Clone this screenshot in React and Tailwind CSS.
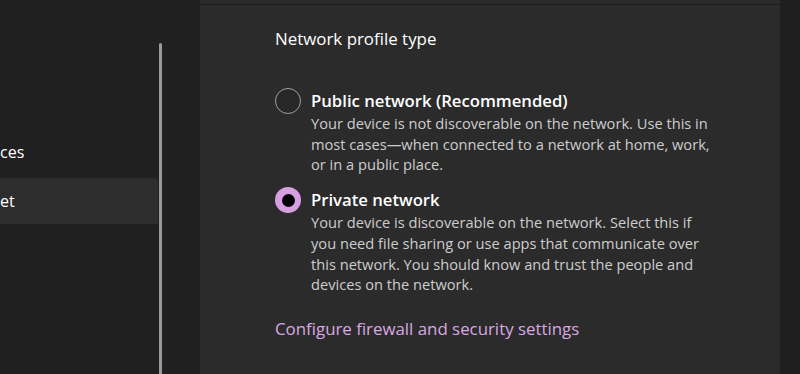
import React from "react";

const font = { fontFamily: '"Open Sans", "Noto Sans", sans-serif' };

function Radio({ checked }) {
  if (checked) {
    return (
      <div className="w-[26px] h-[26px] rounded-full bg-[#d89ee2] flex items-center justify-center shrink-0">
        <div className="w-[13px] h-[13px] rounded-full bg-black" />
      </div>
    );
  }
  return (
    <div className="w-[26px] h-[26px] rounded-full border-[1.5px] border-[#a0a0a0] bg-[#272727] shrink-0" />
  );
}

function Option({ checked, title, lines }) {
  return (
    <div className="flex items-start gap-[10px]">
      <div className="h-[24px] flex items-center">
        <Radio checked={checked} />
      </div>
      <div>
        <div className="text-[16.7px] leading-[24px] font-semibold text-white">{title}</div>
        <div className="text-[14.65px] leading-[20.7px] text-[#cdcdcd] mt-[0px]">
          {lines.map((l, i) => (
            <div key={i} className="whitespace-nowrap">{l}</div>
          ))}
        </div>
      </div>
    </div>
  );
}

export default function App() {
  return (
    <div className="w-[800px] h-[374px] bg-[#202020] flex overflow-hidden" style={font}>
      <div className="w-[159px] shrink-0 flex flex-col pt-[130px]">
        <div className="h-[48px] flex items-center pb-[4px] text-white text-[16px]">ces</div>
        <div className="h-[46px] w-[158px] bg-[#2d2d2d] rounded-r-[3px] flex items-center text-white text-[16px]">
          et
        </div>
      </div>
      <div className="w-[3px] shrink-0 pt-[43px]">
        <div className="w-[3px] h-full bg-[#9b9b9b] rounded-t-full" />
      </div>
      <div className="w-[38px] shrink-0" />
      <div className="w-[580px] shrink-0 flex flex-col">
        <div className="h-[4px] bg-[#2b2b2b]" />
        <div className="h-[1px] bg-[#1c1c1c]" />
        <div className="flex-1 bg-[#2b2b2b] pl-[75px] pt-[22px]">
          <div className="text-[16.9px] leading-[24px] text-white">Network profile type</div>
          <div className="mt-[38px]">
            <Option
              checked={false}
              title="Public network (Recommended)"
              lines={[
                "Your device is not discoverable on the network. Use this in",
                "most cases\u2014when connected to a network at home, work,",
                "or in a public place.",
              ]}
            />
          </div>
          <div className="mt-[13px]">
            <Option
              checked={true}
              title="Private network"
              lines={[
                "Your device is discoverable on the network. Select this if",
                "you need file sharing or use apps that communicate over",
                "this network. You should know and trust the people and",
                "devices on the network.",
              ]}
            />
          </div>
          <div className="mt-[22px] text-[16.85px] leading-[24px] text-[#d9a8e3]">
            Configure firewall and security settings
          </div>
        </div>
      </div>
      <div className="flex-1 bg-[#1f1f1f]" />
    </div>
  );
}
